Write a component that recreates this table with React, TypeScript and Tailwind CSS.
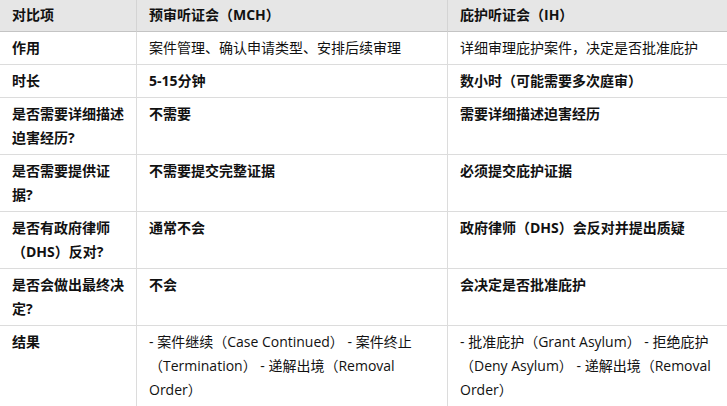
import React from 'react';

type Row = {
  label: string;
  mch: string;
  ih: string;
  strong?: boolean;
};

const rows: Row[] = [
  { label: '作用', mch: '案件管理、确认申请类型、安排后续审理', ih: '详细审理庇护案件，决定是否批准庇护' },
  { label: '时长', mch: '5-15分钟', ih: '数小时（可能需要多次庭审）', strong: true },
  { label: '是否需要详细描述迫害经历?', mch: '不需要', ih: '需要详细描述迫害经历', strong: true },
  { label: '是否需要提供证据?', mch: '不需要提交完整证据', ih: '必须提交庇护证据', strong: true },
  { label: '是否有政府律师（DHS）反对?', mch: '通常不会', ih: '政府律师（DHS）会反对并提出质疑', strong: true },
  { label: '是否会做出最终决定?', mch: '不会', ih: '会决定是否批准庇护', strong: true },
  {
    label: '结果',
    mch: '- 案件继续（Case Continued） - 案件终止（Termination） - 递解出境（Removal Order）',
    ih: '- 批准庇护（Grant Asylum） - 拒绝庇护（Deny Asylum） - 递解出境（Removal Order）',
  },
];

export default function App() {
  return (
    <div
      className="w-[727px] h-[406px] overflow-hidden bg-white text-[14px] leading-6 text-[#111111]"
      style={{ fontFamily: '"Open Sans", "Noto Sans CJK SC", sans-serif' }}
    >
      <div className="grid grid-cols-[137px_311px_1fr]">
        {/* Header */}
        <div className="bg-[#e6e6e6] border-r border-b border-r-[#d4d4d4] border-b-[#c4c4c4] px-3 pt-[3px] pb-1 font-bold">对比项</div>
        <div className="bg-[#e6e6e6] border-r border-b border-r-[#d4d4d4] border-b-[#c4c4c4] px-3 pt-[3px] pb-1 font-bold">预审听证会（MCH）</div>
        <div className="bg-[#e6e6e6] border-b border-b-[#c4c4c4] px-3 pt-[3px] pb-1 font-bold">庇护听证会（IH）</div>

        {rows.map((r) => (
          <React.Fragment key={r.label}>
            <div className="border-r border-b border-[#dcdcdc] px-3 py-1 font-bold">{r.label}</div>
            <div className={`border-r border-b border-[#dcdcdc] px-3 py-1 ${r.strong ? 'font-bold' : ''}`}>{r.mch}</div>
            <div className={`border-b border-[#dcdcdc] px-3 py-1 ${r.strong ? 'font-bold' : ''}`}>{r.ih}</div>
          </React.Fragment>
        ))}
      </div>
    </div>
  );
}
